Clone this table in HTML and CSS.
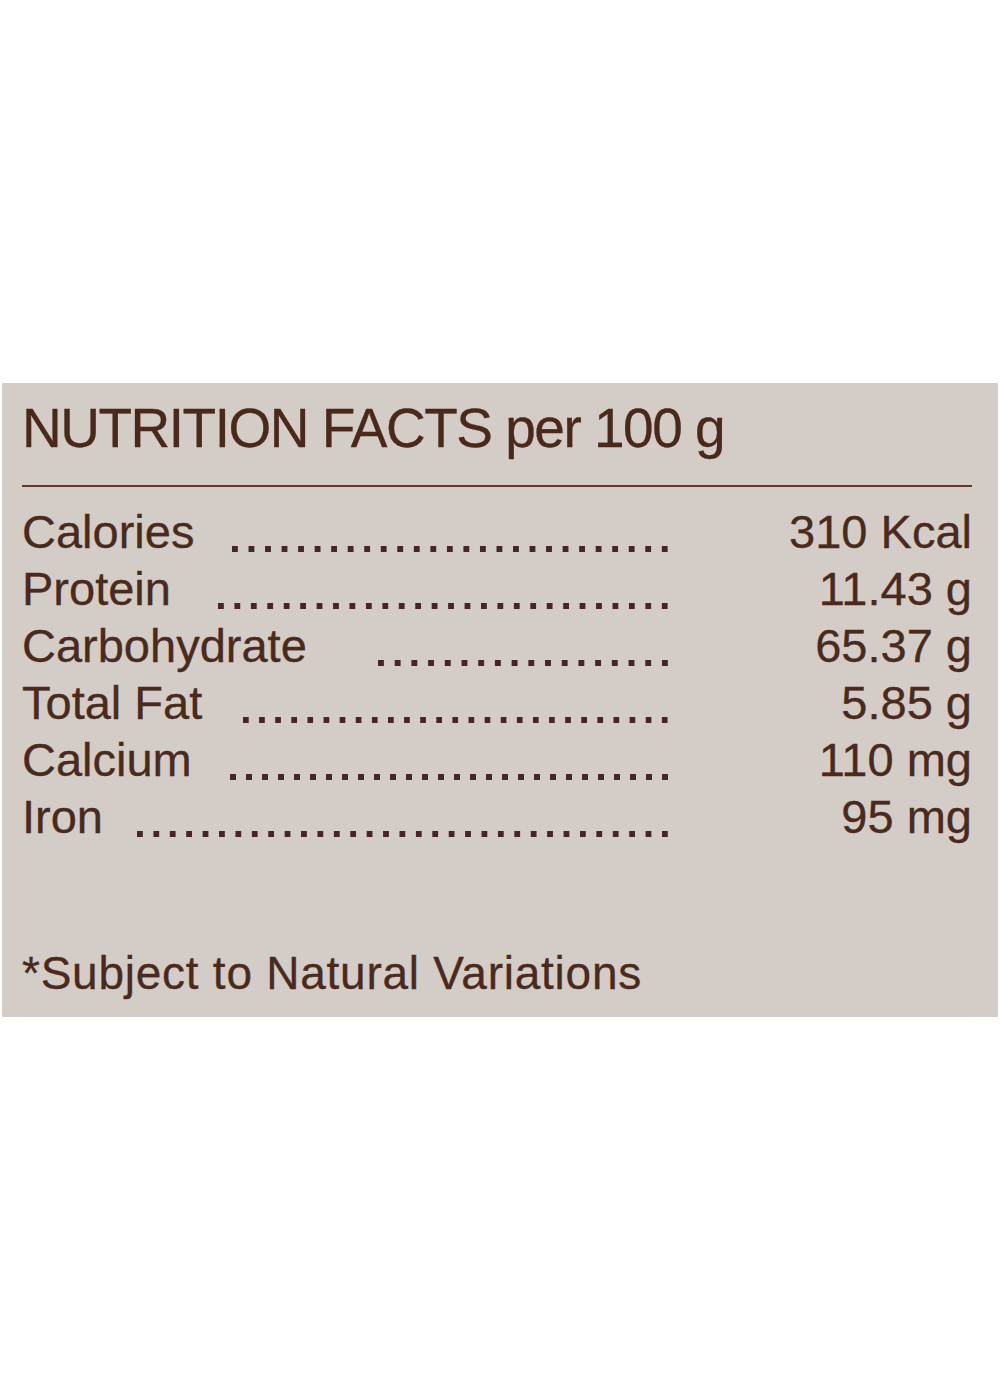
FILE: index.html
```html
<!DOCTYPE html>
<html lang="en">
<head>
<meta charset="utf-8">
<title>Nutrition Facts</title>
<link rel="stylesheet" href="styles.css">
</head>
<body>
<section class="panel">
  <h1 class="title">NUTRITION FACTS per 100 g</h1>
  <hr class="rule">
  <ul class="rows">
    <li class="row"><span class="label">Calories</span><span class="dots d-cal"></span><span class="value">310 Kcal</span></li>
    <li class="row"><span class="label">Protein</span><span class="dots d-pro"></span><span class="value">11.43 g</span></li>
    <li class="row"><span class="label">Carbohydrate</span><span class="dots d-carb"></span><span class="value">65.37 g</span></li>
    <li class="row"><span class="label">Total Fat</span><span class="dots d-fat"></span><span class="value">5.85 g</span></li>
    <li class="row"><span class="label">Calcium</span><span class="dots d-cal2"></span><span class="value">110 mg</span></li>
    <li class="row"><span class="label">Iron</span><span class="dots d-iron"></span><span class="value">95 mg</span></li>
  </ul>
  <p class="note">*Subject to Natural Variations</p>
</section>
</body>
</html>
```
FILE: styles.css
```css
html, body {
  margin: 0;
  padding: 0;
  background: #ffffff;
}

body {
  font-family: "Liberation Sans", Arial, sans-serif;
  color: #4a2a1c;
}

.panel {
  box-sizing: border-box;
  margin: 383px 0 0 2px;
  width: 996px;
  height: 634px;
  padding: 18px 26px 21px 20px;
  background: #d4ccc7;
}

.title {
  margin: 0;
  font-size: 55px;
  line-height: 55px;
  font-weight: normal;
  letter-spacing: -1.5px;
  color: #4a281a;
  -webkit-text-stroke: 0.3px #4a281a;
}

.rule {
  margin: 29px 0 16px 0;
  border: 0;
  height: 2px;
  background: #6a3526;
}

.rows {
  list-style: none;
  margin: 0;
  padding: 0;
}

.row {
  display: flex;
  align-items: flex-start;
  font-size: 47px;
  line-height: 57px;
  height: 57px;
  -webkit-text-stroke: 0.3px #4a2a1c;
}

.label {
  flex: none;
  white-space: nowrap;
}

.dots {
  flex: none;
  margin-left: auto;
  margin-top: 43px;
  height: 6px;
  background-image: linear-gradient(to right, #4a2420 0, #4a2420 6px, transparent 6px, transparent 16px);
  background-size: 16px 6px;
  background-repeat: space no-repeat;
  background-position: left top;
}

.d-cal { width: 446px; }
.d-pro { width: 460px; }
.d-carb { width: 300px; margin-right: 5px; }
.d-fat { width: 435px; }
.d-cal2 { width: 448px; }
.d-iron { width: 541px; }

.value {
  flex: none;
  width: 294px;
  margin-right: 0;
  text-align: right;
  white-space: nowrap;
}

.d-carb + .value { width: 289px; }

.note {
  margin: 105px 0 0 0;
  font-size: 46px;
  line-height: 46px;
  letter-spacing: 0.75px;
  color: #4a2a1c;
  -webkit-text-stroke: 0.3px #4a2a1c;
}
```
